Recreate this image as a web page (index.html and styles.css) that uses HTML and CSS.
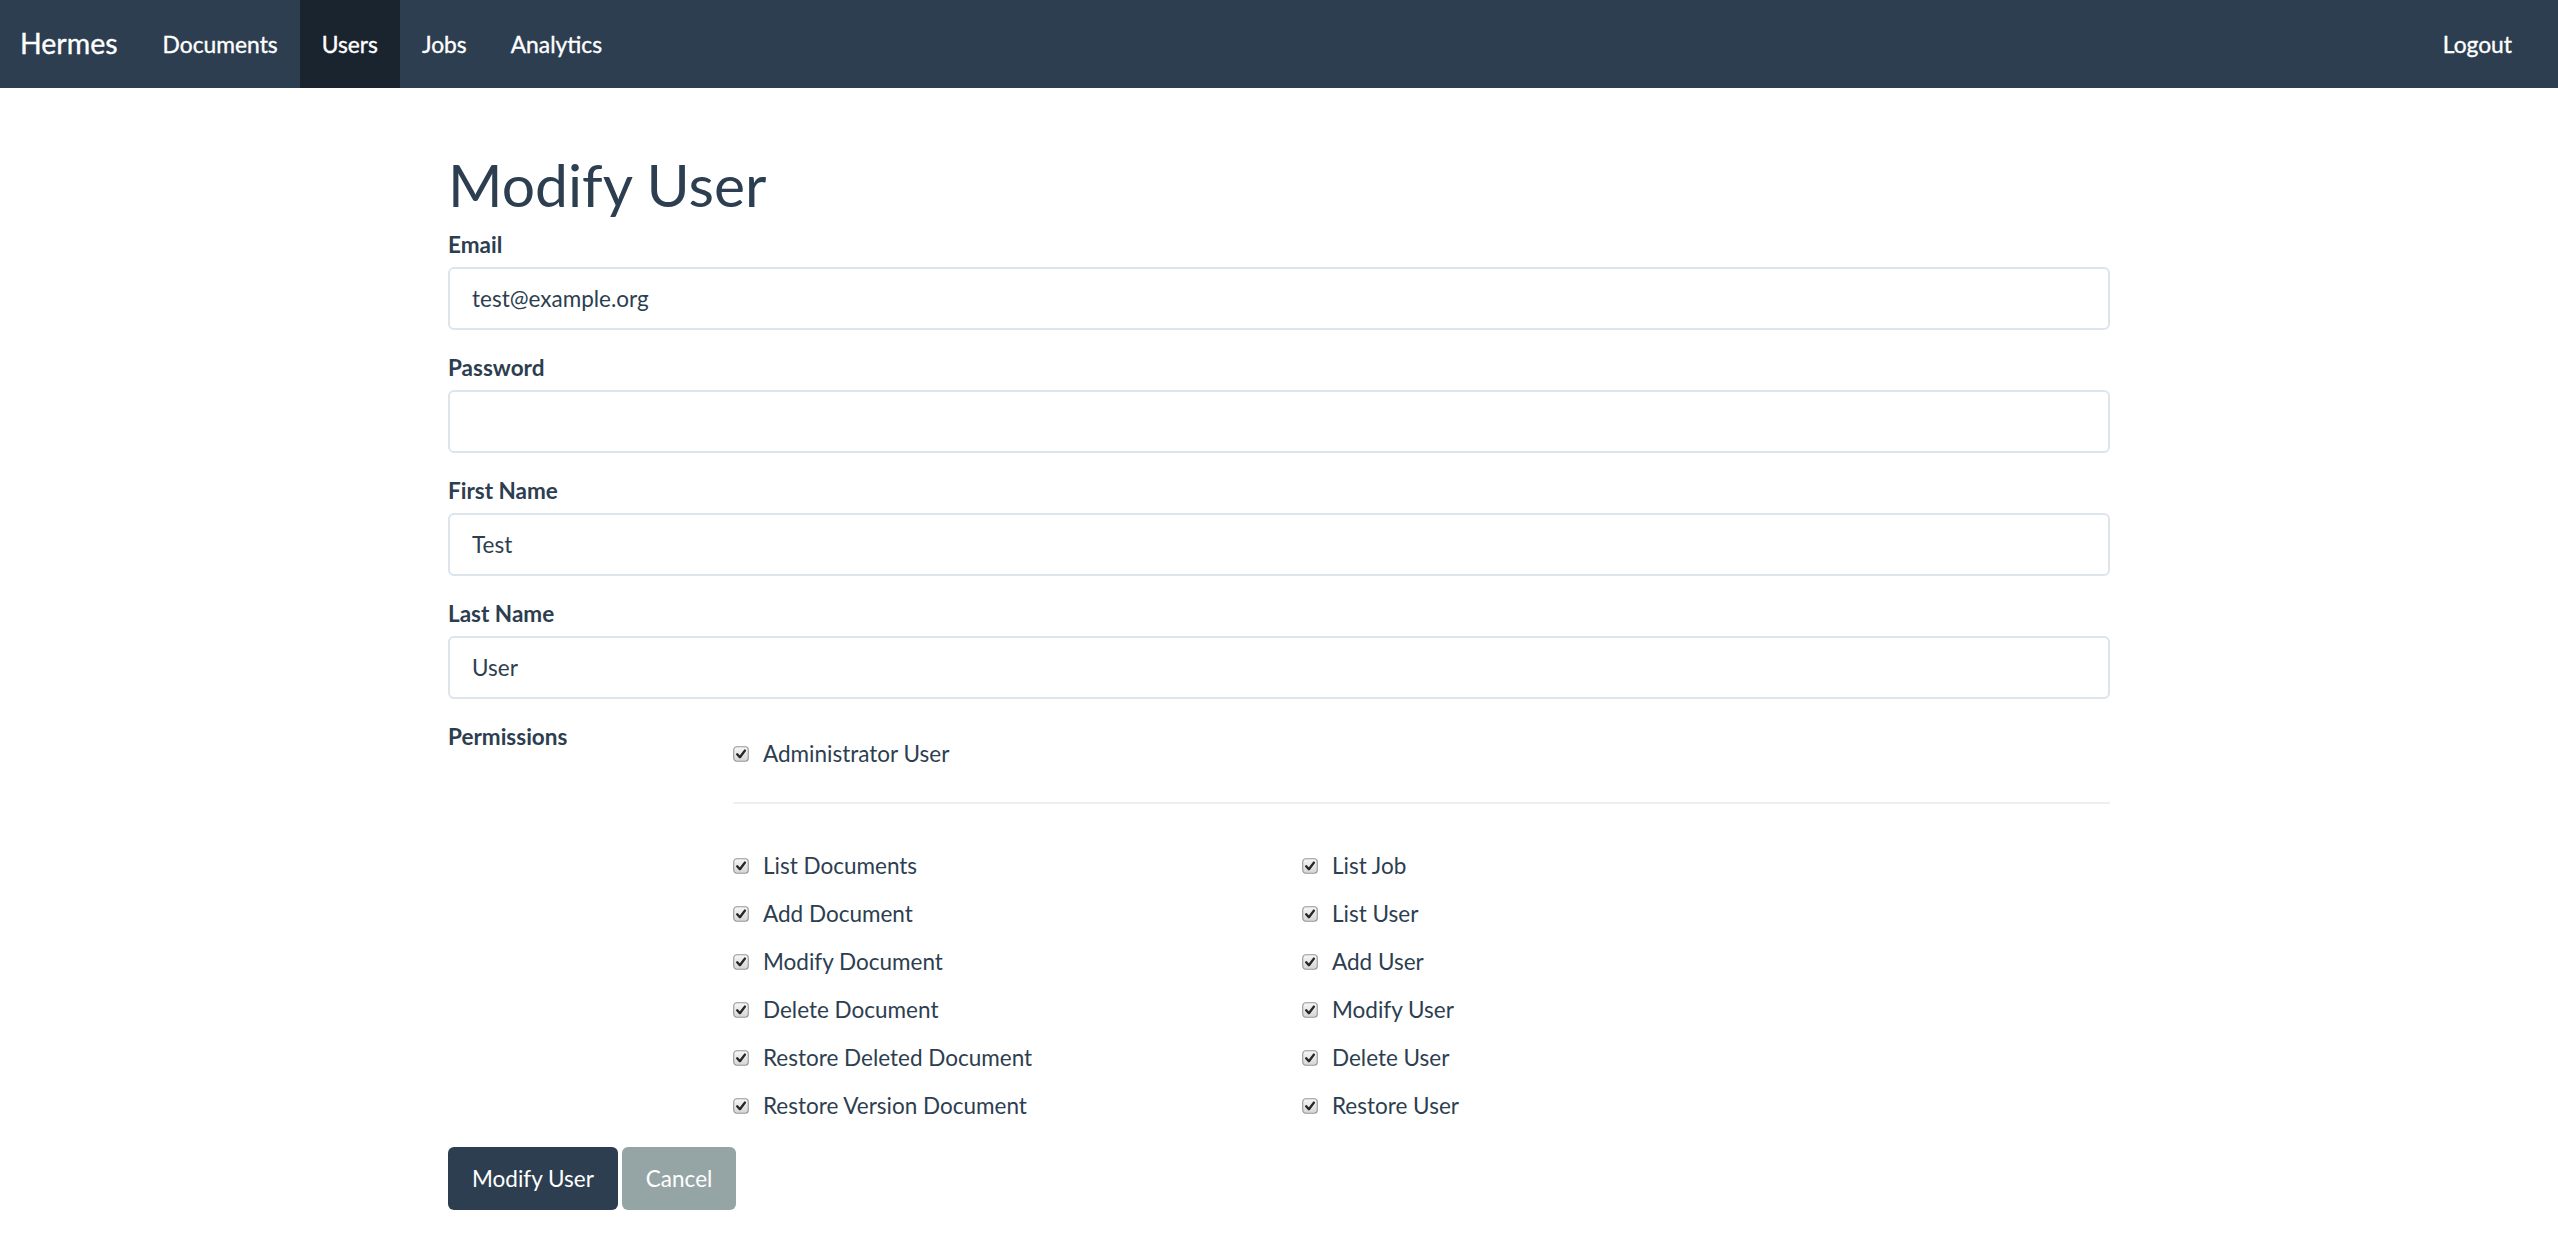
FILE: index.html
```html
<!DOCTYPE html>
<html lang="en">
<head>
<meta charset="utf-8">
<title>Hermes - Modify User</title>
<link rel="stylesheet" href="styles.css">
</head>
<body>
<svg width="0" height="0" class="defs" aria-hidden="true">
  <defs>
    <linearGradient id="cbg" x1="0" y1="0" x2="0" y2="1">
      <stop offset="0" stop-color="#f7f7f7"/>
      <stop offset="1" stop-color="#d6d6d6"/>
    </linearGradient>
    <symbol id="chk" viewBox="0 0 16 16">
      <rect x="0.75" y="0.75" width="14.5" height="14.5" rx="3" fill="url(#cbg)" stroke="#969696" stroke-width="1.1"/>
      <path d="M4.2 8.3 L6.9 11.2 L11.9 4.6" fill="none" stroke="#262626" stroke-width="2.4" stroke-linecap="round" stroke-linejoin="round"/>
    </symbol>
  </defs>
</svg>

<nav class="navbar">
  <a class="brand" href="#">Hermes</a>
  <ul class="nav">
    <li><a href="#">Documents</a></li>
    <li class="active"><a href="#">Users</a></li>
    <li><a href="#">Jobs</a></li>
    <li><a href="#">Analytics</a></li>
  </ul>
  <a class="logout" href="#">Logout</a>
</nav>

<main class="container">
  <h1 class="title">Modify User</h1>
  <form class="form">
    <div class="form-group">
      <label class="control-label" for="email">Email</label>
      <input class="form-control" id="email" type="text" value="test@example.org">
    </div>
    <div class="form-group">
      <label class="control-label" for="password">Password</label>
      <input class="form-control" id="password" type="password" value="">
    </div>
    <div class="form-group">
      <label class="control-label" for="first">First Name</label>
      <input class="form-control" id="first" type="text" value="Test">
    </div>
    <div class="form-group">
      <label class="control-label" for="last">Last Name</label>
      <input class="form-control" id="last" type="text" value="User">
    </div>

    <div class="perm-group">
      <div class="perm-label">Permissions</div>
      <div class="perm-options">
        <label class="check"><svg class="cb"><use href="#chk"/></svg><span>Administrator User</span></label>
        <hr class="divider">
        <div class="perm-grid">
          <div class="perm-col">
            <label class="check"><svg class="cb"><use href="#chk"/></svg><span>List Documents</span></label>
            <label class="check"><svg class="cb"><use href="#chk"/></svg><span>Add Document</span></label>
            <label class="check"><svg class="cb"><use href="#chk"/></svg><span>Modify Document</span></label>
            <label class="check"><svg class="cb"><use href="#chk"/></svg><span>Delete Document</span></label>
            <label class="check"><svg class="cb"><use href="#chk"/></svg><span>Restore Deleted Document</span></label>
            <label class="check"><svg class="cb"><use href="#chk"/></svg><span>Restore Version Document</span></label>
          </div>
          <div class="perm-col">
            <label class="check"><svg class="cb"><use href="#chk"/></svg><span>List Job</span></label>
            <label class="check"><svg class="cb"><use href="#chk"/></svg><span>List User</span></label>
            <label class="check"><svg class="cb"><use href="#chk"/></svg><span>Add User</span></label>
            <label class="check"><svg class="cb"><use href="#chk"/></svg><span>Modify User</span></label>
            <label class="check"><svg class="cb"><use href="#chk"/></svg><span>Delete User</span></label>
            <label class="check"><svg class="cb"><use href="#chk"/></svg><span>Restore User</span></label>
          </div>
        </div>
      </div>
    </div>

    <div class="actions">
      <button type="button" class="btn btn-primary">Modify User</button>
      <button type="button" class="btn btn-default">Cancel</button>
    </div>
  </form>
</main>
</body>
</html>
```

FILE: styles.css
```css
* { box-sizing: border-box; }

html, body {
  margin: 0;
  padding: 0;
  background: #ffffff;
}

body {
  font-family: Lato, "Open Sans", "Noto Sans", sans-serif;
  font-size: 22.5px;
  line-height: 31px;
  color: #2c3e50;
}

.defs {
  position: absolute;
  width: 0;
  height: 0;
  overflow: hidden;
}

/* ---------- navbar ---------- */
.navbar {
  display: flex;
  align-items: stretch;
  height: 88px;
  background: #2c3e50;
  padding: 0 46px 0 0;
}

.navbar a {
  color: #ffffff;
  text-decoration: none;
  display: flex;
  align-items: center;
  -webkit-text-stroke: 0.35px #ffffff;
}

.brand {
  font-size: 28.5px;
  padding: 0 22px 2px 20px;
}

.nav {
  display: flex;
  list-style: none;
  margin: 0 0 0 1px;
  padding: 0;
}

.nav li {
  display: flex;
}

.nav li a {
  padding: 0 22px;
  font-size: 22.8px;
}

.nav li.active a {
  background: #1a242f;
}

.logout {
  margin-left: auto;
  padding: 0 0 0 22px;
  font-size: 22.8px;
}

/* ---------- content ---------- */
.container {
  width: 1662px;
  margin: 0 auto;
  padding-top: 64px;
}

.title {
  margin: 0 0 11px;
  font-size: 58.8px;
  line-height: 66px;
  font-weight: 400;
  color: #2c3e50;
}

.form-group {
  margin-bottom: 22px;
}

.control-label {
  display: block;
  font-weight: 700;
  line-height: 31px;
  margin-bottom: 7px;
}

.form-control {
  display: block;
  width: 100%;
  height: 63px;
  padding: 0 22px;
  border: 2px solid #dce4ec;
  border-radius: 6px;
  font-family: inherit;
  font-size: 22.5px;
  color: #2c3e50;
  background: #ffffff;
  outline: none;
}

/* ---------- permissions ---------- */
.perm-group {
  display: flex;
}

.perm-label {
  width: 285px;
  flex: none;
  font-weight: 700;
  line-height: 31px;
}

.perm-options {
  flex: 1;
  padding-top: 17px;
}

.check {
  display: flex;
  align-items: center;
  height: 31px;
}

.cb {
  width: 16px;
  height: 16px;
  flex: none;
  margin-right: 14px;
  margin-top: 1px;
}

.divider {
  border: 0;
  border-top: 2px solid #ecf0f1;
  margin: 33px 0 46px;
}

.perm-grid {
  display: grid;
  grid-template-columns: 569px 1fr;
}

.perm-col {
  display: flex;
  flex-direction: column;
  gap: 17px;
}

/* ---------- buttons ---------- */
.actions {
  display: flex;
  gap: 4px;
  margin-top: 26px;
  padding-bottom: 24px;
}

.btn {
  height: 63px;
  padding: 0 24px;
  border: none;
  border-radius: 6px;
  font-family: inherit;
  font-size: 22.5px;
  color: #ffffff;
  cursor: pointer;
}

.btn-primary {
  background: #2c3e50;
}

.btn-default {
  background: #95a5a6;
}
```
